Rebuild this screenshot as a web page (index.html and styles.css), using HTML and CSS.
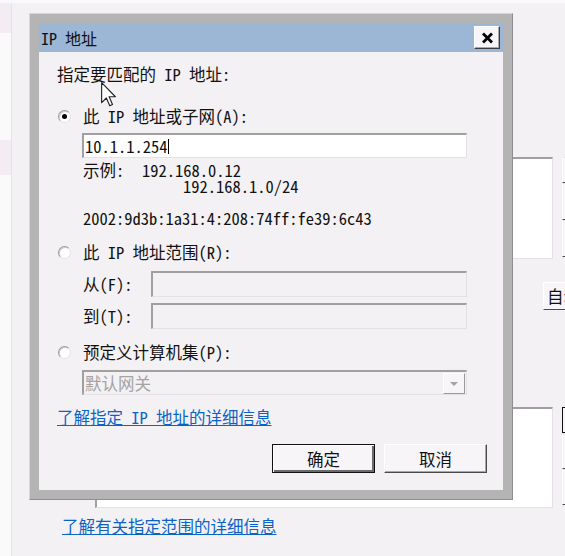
FILE: index.html
```html
<!DOCTYPE html>
<html lang="zh-CN">
<head>
  <meta charset="UTF-8">
  <meta name="viewport" content="width=device-width, initial-scale=1.0">
  <title>IP 地址</title>
  <link rel="stylesheet" href="styles.css">
</head>
<body>
  <div class="desk">
    <div class="side">
      <span class="side__tab"></span>
      <span class="side__tab side__tab--low"></span>
    </div>

    <!-- 뒤쪽 창 -->
    <div class="main">
      <div class="bgRow bgRow--top">
        <div class="bgBox bgBox--top"></div>
        <div class="slivers">
          <span class="sliver sliver--s"></span>
          <span class="sliver sliver--m"></span>
          <span class="sliver sliver--m"></span>
        </div>
      </div>
      <button class="autoBtn">自动(U)...</button>
      <div class="bgRow bgRow--low">
        <div class="bgBox bgBox--low"></div>
        <div class="slivers">
          <span class="sliver sliver--s sliver--def"></span>
          <span class="sliver sliver--l"></span>
          <span class="sliver sliver--l"></span>
        </div>
      </div>
      <a href="#" class="bgLink">了解有关指定范围的详细信息</a>
    </div>

    <!-- IP 주소 대화상자 -->
    <div class="dialog">
      <div class="window">
        <div class="titlebar">
          <span class="title">IP 地址</span>
          <button class="closeBtn" aria-label="关闭">
            <svg width="13" height="12" viewBox="0 0 13 12"><path d="M2 1.5 L11 10.5 M11 1.5 L2 10.5" stroke="#000" stroke-width="2.8" fill="none"/></svg>
          </button>
        </div>

        <div class="body">
          <p class="lead">指定要匹配的 IP 地址:</p>

          <div class="opt opt--first"><span class="radio radio--on"></span>此 IP 地址或子网(A):</div>
          <div class="field field--wide"><span>10.1.1.254</span><span class="caret"></span></div>
          <div class="example"><span class="example__label">示例:</span><span>192.168.0.12</span></div>
          <div class="example example--indent">192.168.1.0/24</div>
          <div class="example example--v6">2002:9d3b:1a31:4:208:74ff:fe39:6c43</div>

          <div class="opt opt--range"><span class="radio"></span>此 IP 地址范围(R):</div>
          <div class="rangeRow"><span class="rangeRow__label">从(F):</span><span class="field field--off"></span></div>
          <div class="rangeRow rangeRow--to"><span class="rangeRow__label">到(T):</span><span class="field field--off"></span></div>

          <div class="opt opt--set"><span class="radio"></span>预定义计算机集(P):</div>
          <div class="combo">
            <span class="combo__text">默认网关</span>
            <span class="combo__arrow"></span>
          </div>

          <a href="#" class="hint">了解指定 IP 地址的详细信息</a>

          <div class="actions">
            <button class="btn btn--default">确定</button>
            <button class="btn">取消</button>
          </div>
        </div>
      </div>
    </div>

    <svg class="pointer" width="15" height="25" viewBox="0 0 12 20">
      <path d="M0.5 0.5 L0.5 16.5 L4.3 12.8 L7 19 L9.2 18 L6.5 11.8 L11.5 11.8 Z" fill="#fff" stroke="#222" stroke-width="0.9" stroke-linejoin="round"/>
    </svg>
  </div>
</body>
</html>
```

FILE: styles.css
```css
* { padding:0; margin:0; box-sizing:border-box; font-family:"Noto Sans Mono CJK SC", "Noto Sans CJK SC", sans-serif; }
a { color:inherit; }
button { font:inherit; color:inherit; cursor:default; }

:root {
  --color-bg: #f4f1f4;
  --color-frame: #b4b4b4;
  --color-title: #9cb6d6;
  --color-link: #0b63c6;
  --color-shade: #a0a0a0;
  --color-light: #e4e1e4;
  --font-size: 16.5px;
}

body {
  background-color: var(--color-bg);
}

.desk {
  position: relative;
  width: 565px;
  height: 556px;
  display: flex;
  overflow: hidden;
  border-top: 3px solid #faf9fa;
  font-size: var(--font-size);
  line-height: 16px;
  color: #111;
}

/* 왼쪽 띠 */
.side {
  width: 12px;
  flex: none;
  display: flex;
  flex-direction: column;
  background-color: #fbfafb;
  border-right: 1px solid #e6e2e6;
}

.side__tab {
  height: 30px;
  background-color: #f3ecf2;
}

.side__tab--low {
  margin-top: 107px;
  height: 35px;
}

.main {
  flex: 1;
  overflow: hidden;
}

.bgRow {
  display: flex;
  align-items: flex-start;
}

.bgRow--top { margin-top: 154px; }
.bgRow--low { margin-top: 97px; }

.bgBox {
  flex: none;
  width: 458px;
  margin-left: 83px;
  background-color: #fff;
  border-top: 2px solid var(--color-shade);
  border-left: 2px solid var(--color-shade);
  border-right: 1px solid var(--color-light);
  border-bottom: 1px solid var(--color-light);
}

.bgBox--top { height: 102px; }
.bgBox--low { height: 101px; }

.slivers {
  flex: none;
  width: 20px;
  margin-left: 9px;
  display: flex;
  flex-direction: column;
}

.sliver {
  background-color: #f7f5f7;
  border-left: 1px solid #fff;
  border-bottom: 1px solid #4a4a4a;
  border-top: 1px solid #e8e5e8;
}

.sliver--s { height: 26px; }
.sliver--m { height: 37px; }
.sliver--l { height: 36px; }

.sliver--def {
  border: 1px solid #111;
}

.autoBtn {
  display: block;
  width: 70px;
  height: 28px;
  margin-top: 23px;
  margin-left: 531px;
  padding-left: 3px;
  text-align: left;
  white-space: nowrap;
  background-color: #f7f5f7;
  border: 1px solid;
  border-color: #fff #4a4a4a #4a4a4a #fff;
}

.bgLink {
  display: inline-block;
  margin-top: 10px;
  margin-left: 50px;
  color: var(--color-link);
}

/* 대화상자 */
.dialog {
  position: absolute;
  left: 29px;
  top: 10px;
  padding: 9px;
  background-color: var(--color-frame);
  border: 1px solid;
  border-color: #d6d6d6 #8e8e8e #8e8e8e #d6d6d6;
}

.window {
  width: 464px;
  height: 467px;
  display: flex;
  flex-direction: column;
  background-color: var(--color-bg);
}

.titlebar {
  height: 29px;
  display: flex;
  align-items: center;
  justify-content: space-between;
  padding: 0 3px 0 2px;
  background-color: var(--color-title);
}

.title {
  font-size: 16px;
}

.closeBtn {
  width: 26px;
  height: 23px;
  display: flex;
  align-items: center;
  justify-content: center;
  background-color: #f7f5f7;
  border: 1px solid;
  border-color: #fff #3c3c3c #3c3c3c #fff;
  box-shadow: inset -1px -1px #a8a8a8;
}

.body {
  flex: 1;
  display: flex;
  flex-direction: column;
  align-items: flex-start;
  padding: 14px 16px 0 18px;
}

.lead { height: 16px; }

.opt {
  height: 16px;
  display: flex;
  align-items: center;
  white-space: nowrap;
}

.opt--first { margin-top: 26px; }
.opt--range { margin-top: 18px; }
.opt--set { margin-top: 15px; }

.radio {
  position: relative;
  width: 13px;
  height: 13px;
  margin: 0 12px 0 1px;
  border-radius: 50%;
  background-color: #fff;
  border: 1px solid;
  border-color: #9a9a9a #e2e2e2 #e2e2e2 #9a9a9a;
  box-shadow: inset 1px 1px #cfcfcf;
}

.radio--on::after {
  content: "";
  position: absolute;
  left: 3px;
  top: 3px;
  width: 5px;
  height: 5px;
  border-radius: 50%;
  background-color: #000;
}

.field {
  display: flex;
  align-items: center;
  height: 26px;
  width: 316px;
  padding-left: 1px;
  background-color: #fff;
  border-top: 2px solid var(--color-shade);
  border-left: 2px solid var(--color-shade);
  border-right: 1px solid var(--color-light);
  border-bottom: 1px solid var(--color-light);
}

.field--wide {
  width: 385px;
  height: 25px;
  margin-top: 9px;
  margin-left: 25px;
}

.field--off {
  background-color: var(--color-bg);
}

.caret {
  width: 1px;
  height: 15px;
  background-color: #000;
}

.example {
  height: 16px;
  margin-top: 4px;
  margin-left: 26px;
  display: flex;
  white-space: nowrap;
}

.example__label { width: 59px; }

.example--indent {
  margin-top: 0;
  margin-left: 126px;
}

.example--v6 { margin-top: 16px; }

.rangeRow {
  display: flex;
  align-items: center;
  margin-top: 11px;
  margin-left: 26px;
}

.rangeRow--to { margin-top: 6px; }

.rangeRow__label {
  width: 68px;
  white-space: nowrap;
}

.combo {
  display: flex;
  align-items: center;
  justify-content: space-between;
  width: 385px;
  height: 25px;
  margin-top: 10px;
  margin-left: 25px;
  padding: 0 1px 0 1px;
  color: #a3a3a3;
  border-top: 2px solid var(--color-shade);
  border-left: 2px solid var(--color-shade);
  border-right: 1px solid var(--color-light);
  border-bottom: 1px solid var(--color-light);
}

.combo__arrow {
  position: relative;
  width: 22px;
  height: 21px;
  background-color: #f7f5f7;
  border: 1px solid;
  border-color: #fff #9a9a9a #9a9a9a #fff;
}

.combo__arrow::after {
  content: "";
  position: absolute;
  left: 6px;
  top: 8px;
  border-left: 4px solid transparent;
  border-right: 4px solid transparent;
  border-top: 4px solid #a3a3a3;
}

.hint {
  height: 16px;
  margin-top: 14px;
  color: var(--color-link);
  white-space: nowrap;
}

.actions {
  align-self: stretch;
  display: flex;
  justify-content: flex-end;
  gap: 9px;
  margin-top: 19px;
}

.btn {
  width: 103px;
  height: 29px;
  background-color: #f7f5f7;
  border: 1px solid;
  border-color: #fff #4a4a4a #4a4a4a #fff;
  box-shadow: inset -1px -1px #a8a8a8;
}

.btn--default {
  border-color: #111;
  box-shadow: inset 1px 1px #fff, inset -2px -2px #6a6a6a;
}

.pointer {
  position: absolute;
  left: 101px;
  top: 79px;
}
```
